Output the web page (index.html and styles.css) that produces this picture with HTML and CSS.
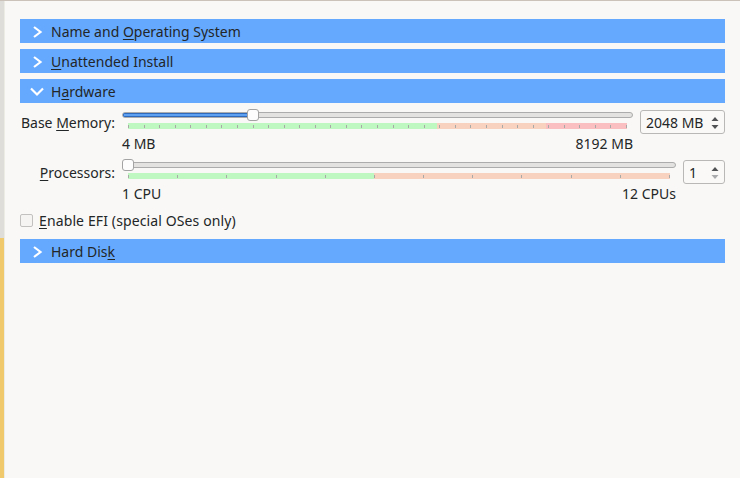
FILE: index.html
```html
<!DOCTYPE html>
<html>
<head>
<meta charset="utf-8">
<link rel="stylesheet" href="styles.css">
</head>
<body>
<div class="window">
  <div class="side"><div class="side-top"></div><div class="side-bottom"></div></div>
  <div class="side-line"></div>
  <main class="content">
    <div class="section-header">
      <svg class="chev" width="16" height="24" viewBox="0 0 16 24"><path d="M4 8 L10.5 13 L4 18" /></svg>
      <span>Name and <u>O</u>perating System</span>
    </div>
    <div class="section-header">
      <svg class="chev" width="16" height="24" viewBox="0 0 16 24"><path d="M4 8 L10.5 13 L4 18" /></svg>
      <span><u>U</u>nattended Install</span>
    </div>
    <div class="section-header">
      <svg class="chev" width="16" height="24" viewBox="0 0 16 24"><path d="M1 9.5 L7 15.5 L13 9.5" /></svg>
      <span>H<u>a</u>rdware</span>
    </div>
    <div class="hw-body">
      <div class="slider-row">
        <div class="row-label">Base <u>M</u>emory:</div>
        <div class="slider-block">
          <div class="slider" style="--v:0.2496">
            <div class="track"><div class="fill"></div></div>
            <div class="handle"></div>
          </div>
          <div class="band band-mem">
            <i></i><i></i><i></i><i></i><i></i><i></i><i></i><i></i><i></i><i></i><i></i>
            <i></i><i></i><i></i><i></i><i></i><i></i><i></i><i></i><i></i><i></i><i></i>
            <i></i><i></i><i></i><i></i><i></i><i></i><i></i><i></i><i></i><i></i><i></i>
          </div>
          <div class="range-labels"><span>4 MB</span><span>8192 MB</span></div>
        </div>
        <div class="spinbox spin-mem">
          <span class="spin-text">2048 MB</span>
          <svg class="spin-arrows" width="14" height="22" viewBox="0 0 14 22"><polygon class="on" points="3.5,10 10.5,10 7,6" /><polygon class="on" points="3.5,14 10.5,14 7,18" /></svg>
        </div>
      </div>
      <div class="slider-row">
        <div class="row-label"><u>P</u>rocessors:</div>
        <div class="slider-block">
          <div class="slider" style="--v:0">
            <div class="track"><div class="fill"></div></div>
            <div class="handle"></div>
          </div>
          <div class="band band-cpu">
            <i></i><i></i><i></i><i></i><i></i><i></i><i></i><i></i><i></i><i></i><i></i><i></i>
          </div>
          <div class="range-labels cpu-labels"><span>1 CPU</span><span>12 CPUs</span></div>
        </div>
        <div class="spinbox spin-cpu">
          <span class="spin-text">1</span>
          <svg class="spin-arrows" width="14" height="22" viewBox="0 0 14 22"><polygon class="on" points="3.5,10 10.5,10 7,6" /><polygon class="off" points="3.5,14 10.5,14 7,18" /></svg>
        </div>
      </div>
      <div class="check-row">
        <span class="checkbox"></span>
        <span class="check-text"><u>E</u>nable EFI (special OSes only)</span>
      </div>
    </div>
    <div class="section-header">
      <svg class="chev" width="16" height="24" viewBox="0 0 16 24"><path d="M4 8 L10.5 13 L4 18" /></svg>
      <span>Hard Dis<u>k</u></span>
    </div>
  </main>
</div>
</body>
</html>
```

FILE: styles.css
```css
* { box-sizing: border-box; }
html, body {
  margin: 0;
  padding: 0;
  width: 740px;
  height: 478px;
  overflow: hidden;
  background: #f9f8f6;
  font-family: "Noto Sans", "DejaVu Sans", sans-serif;
  font-size: 14px;
  color: #232627;
}
.window {
  display: flex;
  height: 478px;
  border-top: 1px solid #cbc2b9;
}
.side {
  width: 4px;
  display: flex;
  flex-direction: column;
}
.side-top { height: 237px; background: #dfddd9; }
.side-bottom { flex: 1; background: #f0c96d; }
.side-line { width: 1px; background: #ecebe4; }
.content {
  flex: 1;
  display: flex;
  flex-direction: column;
  gap: 6px;
  padding: 18px 15px 0 15px;
}
.section-header {
  height: 24px;
  background: #65a9ff;
  display: flex;
  align-items: center;
  padding-left: 10px;
  gap: 5px;
  line-height: 19px;
}
.chev { flex: none; display: block; }
.chev path {
  fill: none;
  stroke: #ffffff;
  stroke-width: 2.2;
  stroke-linejoin: miter;
}
u {
  text-decoration: underline;
  text-decoration-thickness: 1px;
  text-underline-offset: 2px;
}
.hw-body {
  display: flex;
  flex-direction: column;
  padding-bottom: 3px;
}
.slider-row {
  display: flex;
  align-items: flex-start;
  gap: 7px;
  margin-bottom: 6px;
}
.row-label {
  width: 95px;
  flex: none;
  text-align: right;
  padding-top: 4px;
  line-height: 19px;
  white-space: nowrap;
}
.slider-block {
  flex: 1;
  display: flex;
  flex-direction: column;
}
.slider {
  position: relative;
  height: 12px;
}
.track {
  margin-top: 3px;
  height: 6px;
  border: 1px solid #acacac;
  border-radius: 3px;
  background: #e3e2e1;
  overflow: hidden;
}
.fill {
  height: 100%;
  width: calc((100% - 12px) * var(--v) + 6px);
  background: #5d9ff0;
  box-shadow: inset 0 0 0 1px #2e69bb;
}
.handle {
  position: absolute;
  top: 0;
  left: calc((100% - 12px) * var(--v));
  width: 12px;
  height: 12px;
  border: 1px solid #a3a3a3;
  border-radius: 3px;
  background: #fdfdfd;
}
.band {
  margin: 2px 6px 0 6px;
  height: 6px;
  display: flex;
  justify-content: space-between;
  align-items: center;
}
.band i {
  display: block;
  width: 1px;
  height: 3px;
  background: #a9aaa8;
}
.band-mem {
  background: linear-gradient(to right, #bff8c0 0, #bff8c0 61.9%, #f9d2bf 61.9%, #f9d2bf 83.8%, #fabfc1 83.8%, #fabfc1 100%);
}
.band-cpu {
  background: linear-gradient(to right, #bff8c0 0, #bff8c0 45.4%, #f9d2bf 45.4%, #f9d2bf 100%);
}
.range-labels {
  display: flex;
  justify-content: space-between;
  margin-top: 5px;
  line-height: 19px;
}
.spinbox {
  margin-top: 1px;
  height: 24px;
  flex: none;
  display: flex;
  align-items: center;
  border: 1px solid #bab8b6;
  border-radius: 3px;
  background: #faf9f8;
  padding: 0 2px 0 5px;
}
.spin-mem { width: 85px; }
.spin-cpu { width: 42px; }
.spin-text { flex: 1; line-height: 19px; white-space: nowrap; }
.spin-arrows { flex: none; display: block; }
.spin-arrows .on { fill: #505254; }
.spin-arrows .off { fill: #a9abad; }
.check-row {
  display: flex;
  align-items: center;
  gap: 6px;
  margin-top: 2px;
  line-height: 19px;
}
.check-text { letter-spacing: 0.12px; }
.checkbox {
  width: 13px;
  height: 13px;
  border: 1px solid #c2c1c0;
  border-radius: 2px;
  background: #f5f4f3;
  flex: none;
}
```
